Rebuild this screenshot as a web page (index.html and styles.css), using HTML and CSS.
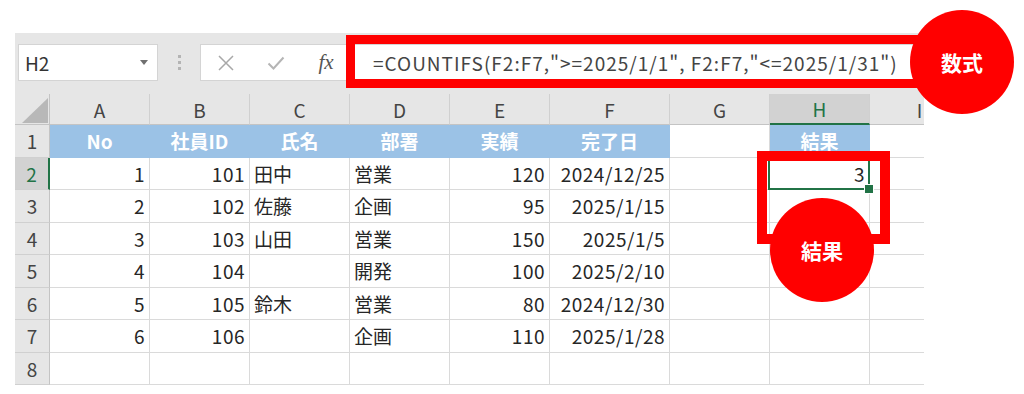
FILE: index.html
```html
<!DOCTYPE html>
<html lang="ja">
<head>
<meta charset="utf-8">
<title>COUNTIFS</title>
<link rel="stylesheet" href="styles.css">
</head>
<body>
<div class="page">
  <div class="sheet">
    <div class="toolbar">
      <div class="namebox"><span>H2</span><span class="caret"></span></div>
      <div class="grip"><i></i><i></i><i></i></div>
      <div class="fbar">
        <span class="ic"><svg width="18" height="18" viewBox="0 0 18 18"><path d="M2 2 L16 16 M16 2 L2 16" stroke="#a8a8a8" stroke-width="1.5" fill="none"/></svg></span>
        <span class="ic"><svg width="18" height="18" viewBox="0 0 18 18"><path d="M1.5 9.5 L6.5 14.5 L16.5 3.5" stroke="#b5b5b5" stroke-width="2" fill="none"/></svg></span>
        <span class="ic fx">fx</span>
        <span class="formula">=COUNTIFS(F2:F7,"&gt;=2025/1/1", F2:F7,"&lt;=2025/1/31")</span>
      </div>
    </div>
    <div class="grid">
      <div class="c corner"><svg width="34" height="30" viewBox="0 0 34 30"><polygon points="33,4 33,29 7,29" fill="#b8b8b8"/></svg></div>
      <div class="c ch">A</div><div class="c ch">B</div><div class="c ch">C</div><div class="c ch">D</div><div class="c ch">E</div><div class="c ch">F</div><div class="c ch">G</div><div class="c ch selh">H</div><div class="c ch">I</div>

      <div class="c rh">1</div>
      <div class="c hd">No</div><div class="c hd">社員ID</div><div class="c hd">氏名</div><div class="c hd">部署</div><div class="c hd">実績</div><div class="c hd">完了日</div><div class="c"></div><div class="c hd">結果</div><div class="c"></div>

      <div class="c rh selr">2</div>
      <div class="c num">1</div><div class="c num">101</div><div class="c">田中</div><div class="c">営業</div><div class="c num">120</div><div class="c num">2024/12/25</div><div class="c"></div><div class="c num active">3</div><div class="c"></div>

      <div class="c rh">3</div>
      <div class="c num">2</div><div class="c num">102</div><div class="c">佐藤</div><div class="c">企画</div><div class="c num">95</div><div class="c num">2025/1/15</div><div class="c"></div><div class="c"></div><div class="c"></div>

      <div class="c rh">4</div>
      <div class="c num">3</div><div class="c num">103</div><div class="c">山田</div><div class="c">営業</div><div class="c num">150</div><div class="c num">2025/1/5</div><div class="c"></div><div class="c"></div><div class="c"></div>

      <div class="c rh">5</div>
      <div class="c num">4</div><div class="c num">104</div><div class="c"></div><div class="c">開発</div><div class="c num">100</div><div class="c num">2025/2/10</div><div class="c"></div><div class="c"></div><div class="c"></div>

      <div class="c rh">6</div>
      <div class="c num">5</div><div class="c num">105</div><div class="c">鈴木</div><div class="c">営業</div><div class="c num">80</div><div class="c num">2024/12/30</div><div class="c"></div><div class="c"></div><div class="c"></div>

      <div class="c rh">7</div>
      <div class="c num">6</div><div class="c num">106</div><div class="c"></div><div class="c">企画</div><div class="c num">110</div><div class="c num">2025/1/28</div><div class="c"></div><div class="c"></div><div class="c"></div>

      <div class="c rh">8</div>
      <div class="c"></div><div class="c"></div><div class="c"></div><div class="c"></div><div class="c"></div><div class="c"></div><div class="c"></div><div class="c"></div><div class="c"></div>
    </div>
  </div>

  <div class="mark mark-f"></div>
  <div class="badge badge-f">数式</div>
  <div class="mark mark-r"></div>
  <div class="badge badge-r">結果</div>
</div>
</body>
</html>
```

FILE: styles.css
```css
* { box-sizing: border-box; }

body {
  margin: 0;
  background: #fff;
  font-family: "Noto Sans CJK JP", "Noto Sans", sans-serif;
}

.page {
  position: relative;
  width: 1024px;
  height: 394px;
  overflow: hidden;
  padding: 33px 0 0 15px;
}

.sheet {
  width: 909px;
  overflow: hidden;
}

.toolbar {
  height: 61px;
  background: #e6e6e6;
  display: flex;
  align-items: flex-start;
  padding: 11px 4px 0 3px;
}

.namebox {
  width: 140px;
  height: 37px;
  background: #fff;
  border: 1px solid #d4d4d4;
  display: flex;
  align-items: center;
  justify-content: space-between;
  padding: 0 9px 0 6px;
  font-size: 19px;
  line-height: 1;
  color: #333;
}

.caret {
  width: 0;
  height: 0;
  border-left: 4px solid transparent;
  border-right: 4px solid transparent;
  border-top: 5px solid #707070;
}

.grip {
  width: 42px;
  height: 37px;
  display: flex;
  flex-direction: column;
  align-items: center;
  justify-content: center;
  gap: 3px;
}

.grip i {
  display: block;
  width: 3px;
  height: 3px;
  background: #b4b4b4;
}

.fbar {
  flex: 1;
  height: 37px;
  background: #fff;
  border: 1px solid #d4d4d4;
  display: flex;
  align-items: center;
  padding-left: 5px;
  gap: 10px;
}

.ic {
  width: 40px;
  height: 35px;
  display: flex;
  align-items: center;
  justify-content: center;
}

.fx {
  font-family: "Liberation Serif", serif;
  font-style: italic;
  font-size: 21px;
  color: #555;
}

.formula {
  margin-left: 17px;
  font-size: 19px;
  line-height: 1;
  letter-spacing: 1px;
  color: #444;
  white-space: nowrap;
}

.grid {
  display: grid;
  grid-template-columns: 35px 100px 100px 100px 100px 100px 120px 100px 100px 100px;
  grid-template-rows: 31px repeat(8, 32.5px);
  width: 1009px;
}

.c {
  border-right: 1px solid #dadada;
  border-bottom: 1px solid #dadada;
  display: flex;
  align-items: center;
  padding: 0 4px;
  font-size: 19px;
  line-height: 1;
  color: #262626;
  white-space: nowrap;
}

.num {
  justify-content: flex-end;
  letter-spacing: 0.5px;
}

.corner {
  background: #e6e6e6;
  padding: 0;
  border-right-color: #c4c4c4;
  border-bottom-color: #c4c4c4;
  align-items: flex-start;
}

.ch {
  background: #e6e6e6;
  justify-content: center;
  color: #444;
  border-right-color: #d0d0d0;
  border-bottom-color: #c4c4c4;
}

.rh {
  background: #e6e6e6;
  justify-content: center;
  color: #444;
  border-right-color: #c4c4c4;
  border-bottom-color: #d0d0d0;
}

.selh {
  background: #d2d2d2;
  color: #217346;
  border-bottom: 2px solid #217346;
}

.selr {
  background: #d2d2d2;
  color: #217346;
  border-right: 2px solid #217346;
}

.hd {
  background: #9bc2e6;
  border-color: #9bc2e6;
  color: #fff;
  font-weight: 700;
  font-size: 19px;
  justify-content: center;
}

.active { position: relative; }

.active::after {
  content: "";
  position: absolute;
  left: -2px;
  top: -2px;
  right: -1px;
  bottom: -1px;
  border: 2px solid #217346;
}

.active::before {
  content: "";
  position: absolute;
  right: -5px;
  bottom: -5px;
  width: 8px;
  height: 8px;
  background: #217346;
  border: 1px solid #fff;
  z-index: 1;
}

.mark {
  position: absolute;
  border: 9px solid #ff0000;
}

.mark-f {
  left: 346px;
  top: 35px;
  width: 584px;
  height: 53px;
}

.mark-r {
  left: 757px;
  top: 151px;
  width: 133px;
  height: 93px;
  border-width: 10px;
}

.badge {
  position: absolute;
  width: 104px;
  height: 104px;
  border-radius: 50%;
  background: #ff0000;
  color: #fff;
  font-weight: 700;
  font-size: 21px;
  display: flex;
  align-items: center;
  justify-content: center;
}

.badge-f { left: 910px; top: 10px; }
.badge-r { left: 770px; top: 198px; }
```
